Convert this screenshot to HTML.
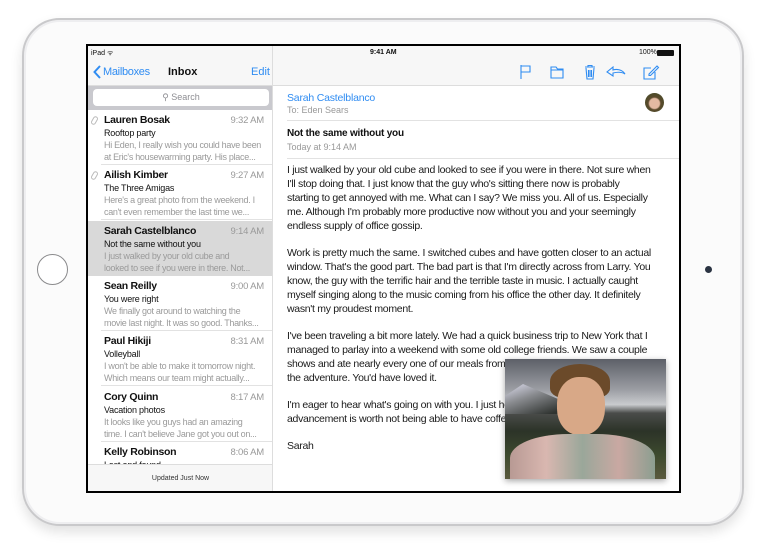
<!DOCTYPE html>
<html><head><meta charset="utf-8"><style>
*{margin:0;padding:0;box-sizing:border-box}
html,body{width:769px;height:555px;overflow:hidden}
body{background:#fff;position:relative;font-family:"Liberation Sans",sans-serif}
.bezel{position:absolute;left:22px;top:18px;width:722px;height:508px;border-radius:38px;background:#fbfbfb;border:2px solid #c9c9cb;box-shadow:0 6px 12px rgba(0,0,0,.12),inset 0 0 0 2px #eeeef0}
.home{position:absolute;left:37px;top:254px;width:31px;height:31px;border-radius:50%;border:1.5px solid #8a8a8c;background:#fff}
.cam{position:absolute;left:705px;top:266px;width:7px;height:7px;border-radius:50%;background:#2a3342}
.screen{position:absolute;left:86px;top:44px;width:595px;height:449px;background:#000;padding:2px}
.in{position:relative;width:100%;height:100%;background:#fff;overflow:hidden}
.abs{position:absolute;white-space:nowrap}
.left{position:absolute;left:0;top:0;width:185px;height:100%;background:#fff;border-right:1px solid #ddd;overflow:hidden}
.nav{position:absolute;left:0;top:0;width:100%;height:40px;background:#f7f7f7;border-bottom:1px solid #ddd}
.blue{color:#2f8cf2}
.row{position:absolute;left:0;width:185px;height:55px;overflow:hidden}
.row .sep{position:absolute;left:13px;right:0;bottom:0;border-bottom:1px solid #e2e2e2}
.nm{position:absolute;left:16px;top:4px;font-size:10.5px;font-weight:bold;color:#111;letter-spacing:-0.3px;white-space:nowrap}
.tm{position:absolute;right:9px;top:5px;font-size:9.5px;color:#999;letter-spacing:-0.2px}
.sb{position:absolute;left:16px;top:18px;font-size:9px;color:#111;letter-spacing:-0.2px;white-space:nowrap}
.pv{position:absolute;left:16px;top:29px;font-size:9px;line-height:12px;color:#9a9a9a;width:168px;white-space:nowrap;letter-spacing:-0.3px;overflow:hidden}
.clip{position:absolute;left:4px;top:6px;width:5px;height:9px;border:1px solid #bbb;border-radius:3px;transform:rotate(30deg)}
.body{font-size:10.5px;line-height:14px;color:#1a1a1a;letter-spacing:-0.3px;white-space:nowrap}
.body p{margin-bottom:13px}
</style></head><body>
<div class="bezel"></div>
<div class="home"></div>
<div class="cam"></div>
<div class="screen"><div class="in">
 <div class="nav"></div>
 <div class="abs" style="left:282px;top:3px;font-size:7px;color:#111;font-weight:bold">9:41 AM</div>
 <div class="abs" style="left:551px;top:3px;font-size:7px;color:#111">100%</div>
 <div class="abs" style="left:569px;top:4px;width:17px;height:6px;background:#111;border-radius:1px"></div>
 <div class="left">
  <div class="nav" style="background:#f7f7f7"></div>
  <div class="abs" style="left:3px;top:3px;font-size:7px;color:#111">iPad ᯤ</div>
  <svg class="abs" style="left:5px;top:19px" width="8" height="14" viewBox="0 0 8 14"><path d="M7 1 L1.5 7 L7 13" fill="none" stroke="#2f8cf2" stroke-width="2"/></svg>
  <div class="abs blue" style="left:15px;top:20px;font-size:11px;letter-spacing:-0.3px">Mailboxes</div>
  <div class="abs" style="left:80px;top:20px;font-size:11px;font-weight:bold;color:#111">Inbox</div>
  <div class="abs blue" style="left:163px;top:20px;font-size:11px">Edit</div>
  <div class="abs" style="left:0;top:40px;width:185px;height:24px;background:#c9c9ce"></div>
  <div class="abs" style="left:5px;top:43px;width:176px;height:17px;background:#fff;border-radius:4px;text-align:center;font-size:9px;line-height:17px;color:#8e8e93">⚲ Search</div>
  <div class="row" style="top:64px"><div class="clip"></div><div class="nm">Lauren Bosak</div><div class="tm">9:32 AM</div><div class="sb">Rooftop party</div><div class="pv">Hi Eden, I really wish you could have been<br>at Eric's housewarming party. His place...</div><div class="sep"></div></div>
  <div class="row" style="top:119px"><div class="clip"></div><div class="nm">Ailish Kimber</div><div class="tm">9:27 AM</div><div class="sb">The Three Amigas</div><div class="pv">Here's a great photo from the weekend. I<br>can't even remember the last time we...</div><div class="sep"></div></div>
  <div class="row" style="top:175px;background:#d9d9d9"><div class="nm">Sarah Castelblanco</div><div class="tm">9:14 AM</div><div class="sb">Not the same without you</div><div class="pv">I just walked by your old cube and<br>looked to see if you were in there. Not...</div></div>
  <div class="row" style="top:230px"><div class="nm">Sean Reilly</div><div class="tm">9:00 AM</div><div class="sb">You were right</div><div class="pv">We finally got around to watching the<br>movie last night. It was so good. Thanks...</div><div class="sep"></div></div>
  <div class="row" style="top:285px"><div class="nm">Paul Hikiji</div><div class="tm">8:31 AM</div><div class="sb">Volleyball</div><div class="pv">I won't be able to make it tomorrow night.<br>Which means our team might actually...</div><div class="sep"></div></div>
  <div class="row" style="top:341px"><div class="nm">Cory Quinn</div><div class="tm">8:17 AM</div><div class="sb">Vacation photos</div><div class="pv">It looks like you guys had an amazing<br>time. I can't believe Jane got you out on...</div><div class="sep"></div></div>
  <div class="row" style="top:396px;height:22px"><div class="nm">Kelly Robinson</div><div class="tm">8:06 AM</div><div class="sb">Lost and found</div></div>
  <div class="abs" style="left:0;top:418px;width:185px;height:29px;background:#f7f7f7;border-top:1px solid #ddd;text-align:center;font-size:7px;line-height:27px;color:#333">Updated Just Now</div>
 </div>
 <svg class="abs" style="left:430px;top:17px" width="160" height="18" viewBox="0 0 160 18" fill="none" stroke="#2f8cf2" stroke-width="1.1">
  <path d="M3 2 V16 M3 3 H12 V9 H3"/>
  <path d="M33 4 H38 L39.5 6 H45 V15 H33 Z M33 7 H45"/>
  <path d="M67 4 H77 M70 4 V2.5 H74 V4 M68 5 L69 16 H75 L76 5 M70.5 7 V14 M72 7 V14 M73.5 7 V14"/>
  <path d="M107 11 C104 6 98 6 95 7 V4 L89 9 L95 13 V10 C99 9 104 9 107 11 Z"/>
  <path d="M133 5 H126 V16 H137 V9 M131 11 L139 3 L140.5 4.5 L132.5 12.5 H131 Z"/>
 </svg>
 <div class="abs blue" style="left:199px;top:46px;font-size:10.5px;letter-spacing:-0.2px">Sarah Castelblanco</div>
 <div class="abs" style="left:199px;top:59px;font-size:9px;color:#999">To: Eden Sears</div>
 <div class="abs" style="left:557px;top:47px;width:19px;height:19px;border-radius:50%;background:radial-gradient(circle at 50% 55%,#e3b9a2 0 35%,#5a4a2c 45%,#3d4a25 100%)"></div>
 <div class="abs" style="left:199px;top:74px;width:394px;border-top:1px solid #e2e2e2"></div>
 <div class="abs" style="left:199px;top:82px;font-size:10px;font-weight:bold;color:#111;letter-spacing:-0.2px">Not the same without you</div>
 <div class="abs" style="left:199px;top:96px;font-size:9px;color:#999">Today at 9:14 AM</div>
 <div class="abs" style="left:199px;top:112px;width:394px;border-top:1px solid #e2e2e2"></div>
 <div class="abs body" style="left:199px;top:117px">
  <p>I just walked by your old cube and looked to see if you were in there. Not sure when<br>I'll stop doing that. I just know that the guy who's sitting there now is probably<br>starting to get annoyed with me. What can I say? We miss you. All of us. Especially<br>me. Although I'm probably more productive now without you and your seemingly<br>endless supply of office gossip.</p>
  <p>Work is pretty much the same. I switched cubes and have gotten closer to an actual<br>window. That's the good part. The bad part is that I'm directly across from Larry. You<br>know, the guy with the terrific hair and the terrible taste in music. I actually caught<br>myself singing along to the music coming from his office the other day. It definitely<br>wasn't my proudest moment.</p>
  <p>I've been traveling a bit more lately. We had a quick business trip to New York that I<br>managed to parlay into a weekend with some old college friends. We saw a couple<br>shows and ate nearly every one of our meals from<br>the adventure. You'd have loved it.</p>
  <p>I'm eager to hear what's going on with you. I just hope the<br>advancement is worth not being able to have coffee.</p>
  <p>Sarah</p>
 </div>
 <div class="abs" style="left:417px;top:313px;width:161px;height:120px;overflow:hidden;box-shadow:0 2px 6px rgba(0,0,0,.35);background:linear-gradient(#5d6068 0%,#9a9ca2 25%,#c9cbce 38%,#4a4c4a 45%,#2c3328 60%,#3d4a2e 80%,#5a5a3e 100%)">
  <div style="position:absolute;left:0;top:25px;width:60px;height:30px;background:linear-gradient(160deg,#dde 0,#8a8c90 40%,#2f3330 90%);clip-path:polygon(0 40%,30% 0,100% 60%,100% 100%,0 100%)"></div>
  <div style="position:absolute;left:45px;top:5px;width:60px;height:35px;border-radius:50% 50% 30% 30%;background:#6b4a2a"></div>
  <div style="position:absolute;left:52px;top:18px;width:48px;height:58px;border-radius:45%;background:#d8a887"></div>
  <div style="position:absolute;left:5px;top:75px;width:145px;height:60px;border-radius:40% 40% 0 0;background:linear-gradient(90deg,#b89a94,#d9b7b0,#9aa79a,#c9a8a2,#8c9e90)"></div>
 </div>
</div></div>
</body></html>
